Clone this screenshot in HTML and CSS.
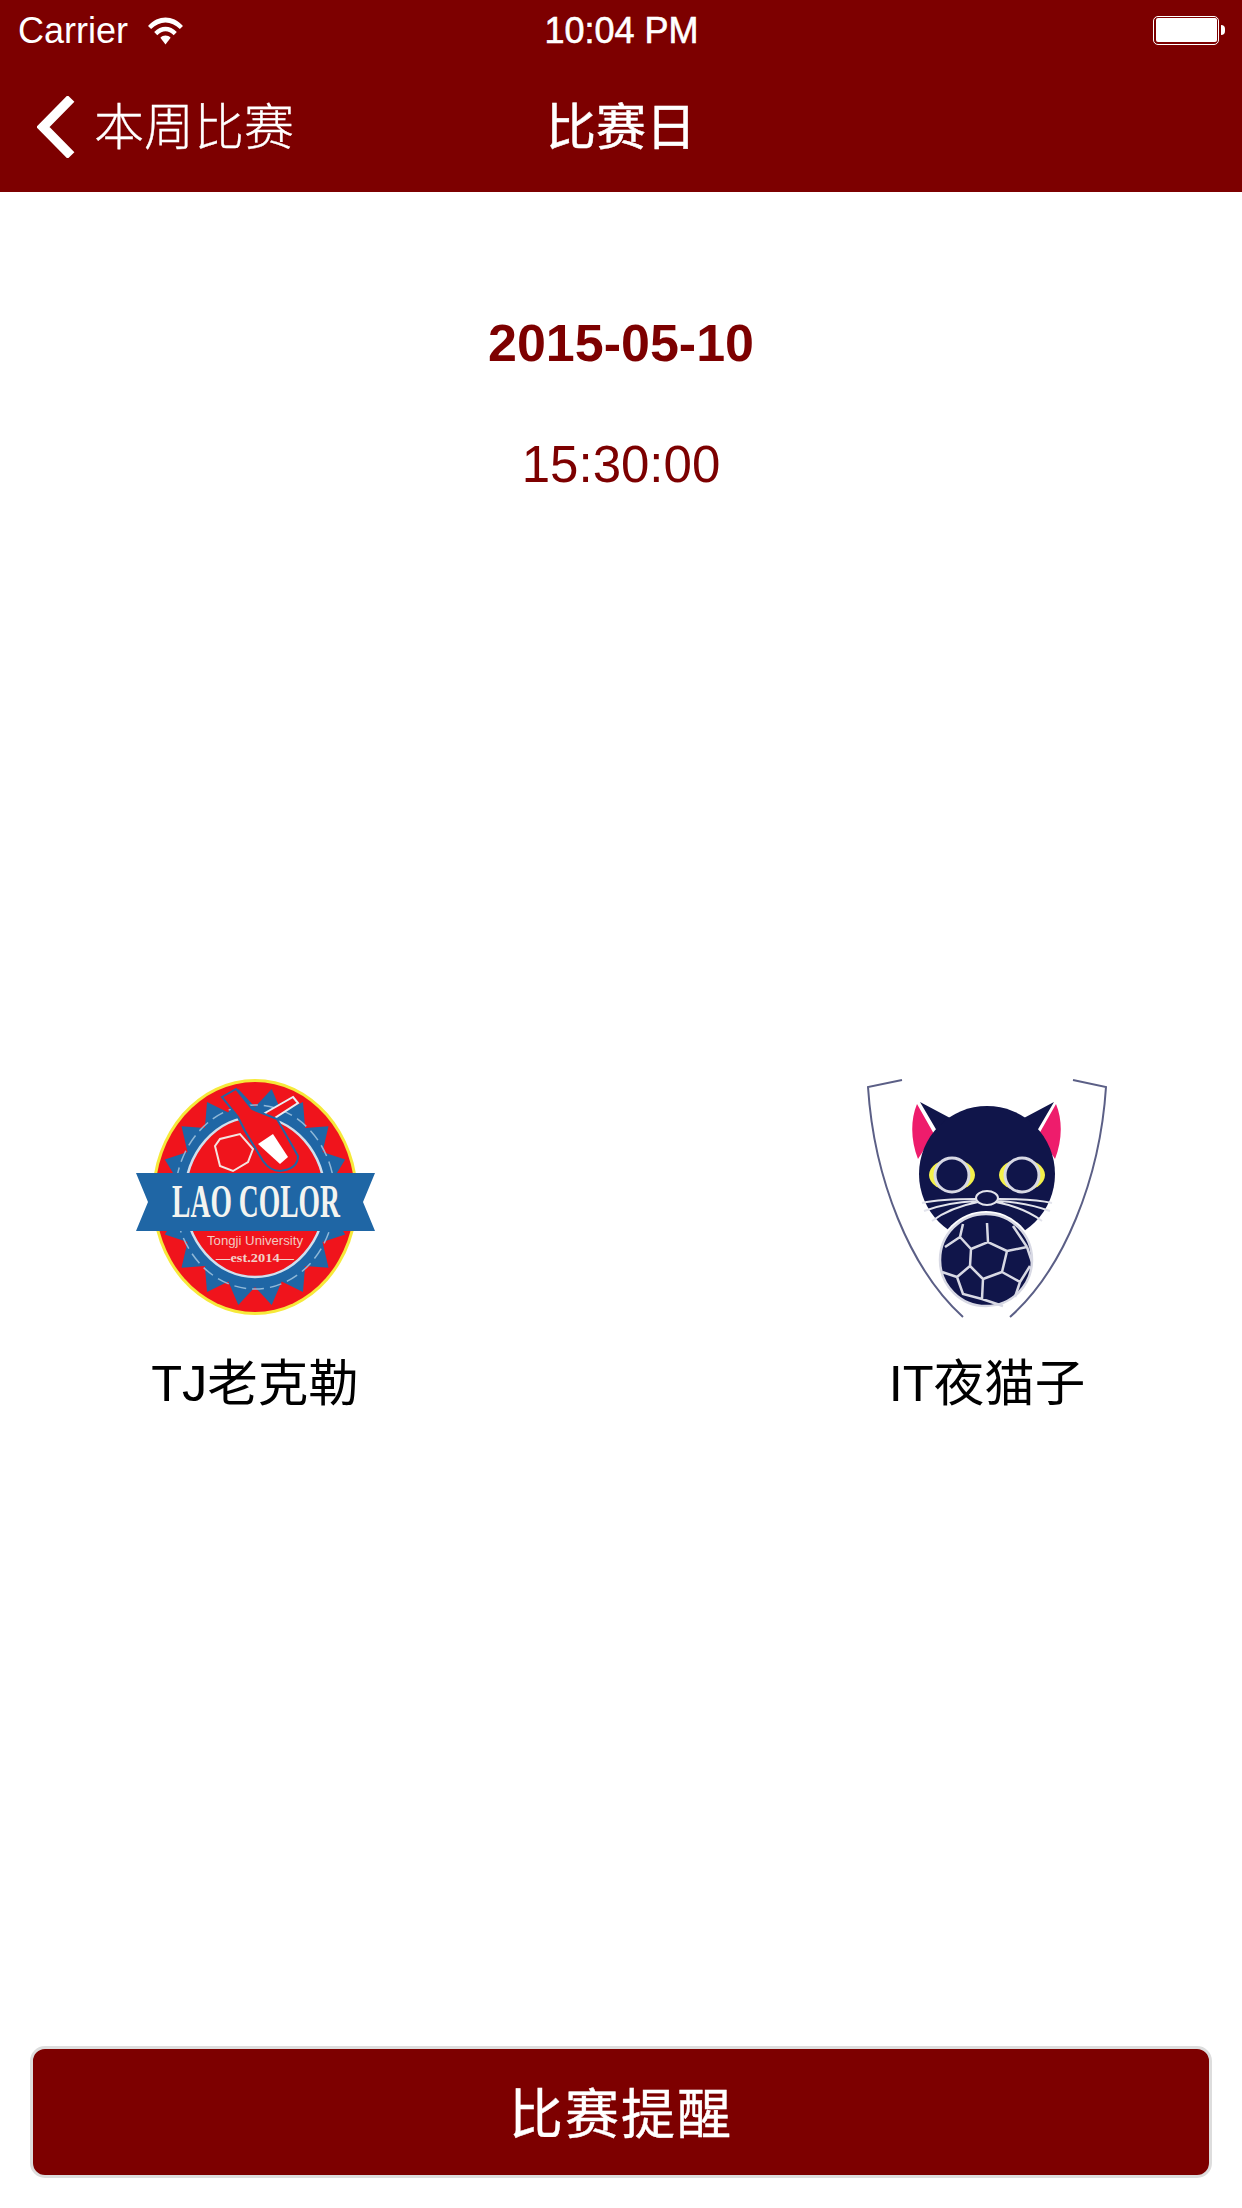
FILE: index.html
```html
<!DOCTYPE html>
<html lang="en">
<head>
    <meta charset="UTF-8">
    <meta name="viewport" content="width=device-width, initial-scale=1.0">
    <title>比赛日</title>
    <link rel="stylesheet" href="styles.css">
</head>
<body>

<div class="page">
    <header class="top-bar">
        <div class="status-bar">
            <div class="status-left">
                <span class="carrier">Carrier</span>
                <svg class="wifi" viewBox="0 0 36 28" width="37" height="29">
                    <path d="M1 9.500C11 -1.500 25 -1.500 35 9.500L32 12.500C23.500 4 12.500 4 4 12.500Z" fill="#fff"/>
                    <path d="M7 15.500C13.500 8.500 22.500 8.500 29 15.500L26 18.500C21 13.500 15 13.500 10 18.500Z" fill="#fff"/>
                    <path d="M13 21C15.500 18 20.500 18 23 21L18 27.500Z" fill="#fff"/>
                </svg>
            </div>
            <span class="clock">10:04 PM</span>
            <div class="status-right">
                <div class="battery"><div class="battery-fill"></div></div>
                <div class="battery-nub"></div>
            </div>
        </div>
        <nav class="nav-bar">
            <a href="#" class="back-link">
                <svg class="chevron" viewBox="0 0 38 62" width="38" height="62">
                    <path d="M34 2.500L6 31L34 59.500" fill="none" stroke="#fff" stroke-width="9.500"/>
                </svg>
                <span class="back-text">本周比赛</span>
            </a>
            <h1 class="nav-title">比赛日</h1>
            <div></div>
        </nav>
    </header>

    <main class="match">
        <div class="match-time">
            <p class="date">2015-05-10</p>
            <p class="time">15:30:00</p>
        </div>

        <div class="teams">
            <div class="team">
                <svg class="logo" viewBox="15 20 240 240" width="240" height="240">
                    <ellipse cx="135" cy="138" rx="103" ry="118" fill="#f6e93a"/>
                    <ellipse cx="135" cy="138" rx="100" ry="115" fill="#f0141c"/>
                    <polygon fill="#1f66a5" points="211.800,153.600 225.200,175.600 202.500,183 208.500,208.700 185.100,207 183,233 161.700,222.600 151.700,246 135,228 118.300,246 108.300,222.600 87,233 84.900,207 61.500,208.700 67.500,183 44.800,175.600 58.200,153.600 58.200,122.400 44.800,100.400 67.500,93 61.500,67.300 84.900,69 87,43 108.300,53.400 118.300,30 135,48 151.700,30 161.700,53.400 183,43 185.100,69 208.500,67.300 202.500,93 225.200,100.400 211.800,122.400"/>
                    <ellipse cx="135" cy="138" rx="80" ry="92" fill="none" stroke="#8fb8d8" stroke-width="1.500" stroke-dasharray="12 6"/>
                    <ellipse cx="135" cy="138" rx="70" ry="80" fill="#f0141c" stroke="#cfe0ee" stroke-width="2.500"/>
                    <path d="M173 38L178 44L150 62L145 54Z" fill="#f0141c" stroke="#e8eef4" stroke-width="2"/>
                    <path d="M95 87L100 80L120 75L133 90L128 103L113 112L100 107Z" fill="#f0141c" stroke="#f4e4e0" stroke-width="2"/>
                    <path d="M102 38L116 30L132 50L157 60L178 97Q178 110 160 112Q150 112 143 102L125 72L118 58Z" fill="#f0141c" stroke="#1f66a5" stroke-width="2"/>
                    <path d="M138 85L153 75L168 98L160 105Z" fill="#fff"/>
                    <path d="M16 114H255L243 143L255 172H16L28 143Z" fill="#1f66a5"/>
                    <text class="logo-name" transform="matrix(0.6 0 0 1 136 158)">LAO COLOR</text>
                    <text x="135" y="186" class="logo-small" textLength="96" lengthAdjust="spacingAndGlyphs">Tongji University</text>
                    <text x="135" y="203" class="logo-est" textLength="78" lengthAdjust="spacingAndGlyphs">—est.2014—</text>
                </svg>
                <p class="team-name">TJ老克勒</p>
            </div>
            <div class="team">
                <svg class="logo" viewBox="17 20 240 240" width="240" height="240">
                    <path d="M52 21L18 28C24 120 60 210 113 258M223 21L256 28C250 120 214 210 160 258" fill="none" stroke="#5b5f86" stroke-width="2"/>
                    <path d="M67 45L84 75L68 100C61 82 60 62 67 45ZM206 45L189 75L205 100C212 82 213 62 206 45Z" fill="#ee1c6c"/>
                    <path d="M70 43L102 60L87 72ZM204 43L172 60L187 72Z" fill="#10154a"/>
                    <circle cx="137" cy="115" r="68" fill="#10154a"/>
                    <ellipse cx="102" cy="116" rx="23" ry="16" fill="#f4f04a"/>
                    <ellipse cx="172" cy="116" rx="23" ry="16" fill="#f4f04a"/>
                    <circle cx="102" cy="116" r="17" fill="#10154a" stroke="#d8d9e4" stroke-width="3"/>
                    <circle cx="172" cy="116" r="17" fill="#10154a" stroke="#d8d9e4" stroke-width="3"/>
                    <path d="M72 144C90 140 108 140 126 140M74 152C90 146 106 143 126 142M82 162C94 153 108 147 128 143M202 144C184 140 166 140 148 140M200 152C184 146 168 143 148 142M192 162C180 153 166 147 146 143" fill="none" stroke="#e3e4ec" stroke-width="2"/>
                    <ellipse cx="137" cy="139" rx="11" ry="7" fill="#10154a" stroke="#e3e4ec" stroke-width="2"/>
                    <circle cx="136" cy="201" r="49" fill="#fff"/>
                    <circle cx="136" cy="201" r="46" fill="#10154a" stroke="#d8d9e4" stroke-width="2.500"/>
                    <path d="M121 190L138 183L157 192L152 213L133 220L120 207ZM138 183L137 164M157 192L177 188M152 213L170 223M133 220L132 240M120 207L107 218M121 190L110 178L113 165M110 178L95 188M107 218L92 213M107 218L113 235L132 240M132 240L153 247M170 223L180 207M177 188L163 167M177 188L182 203M170 223L165 238" fill="none" stroke="#d8d9e4" stroke-width="2.500"/>
                </svg>
                <p class="team-name">IT夜猫子</p>
            </div>
        </div>

        <a href="#" class="remind-btn">比赛提醒</a>
    </main>
</div>

</body>
</html>
```

FILE: styles.css
```css
body {
    font-family: "Liberation Sans", "Noto Sans CJK SC", sans-serif;
    margin: 0;
    padding: 0;
    background-color: #fff;
}

p {
    margin: 0;
}

.page {
    display: flex;
    flex-direction: column;
    height: 2208px;
    overflow: hidden;
}

.top-bar {
    background-color: #7d0000;
    color: #fff;
}

.status-bar {
    display: grid;
    grid-template-columns: 1fr auto 1fr;
    align-items: center;
    height: 60px;
    padding: 2px 17px 0 18px;
    box-sizing: border-box;
}

.status-left {
    display: flex;
    align-items: center;
    gap: 19px;
}

.carrier {
    font-size: 36px;
}

.wifi {
    margin-bottom: 2px;
}

.clock {
    font-size: 36px;
    -webkit-text-stroke: 0.6px #fff;
}

.status-right {
    display: flex;
    align-items: center;
    justify-content: flex-end;
    gap: 2px;
    margin-bottom: 2px;
}

.battery {
    width: 66px;
    height: 29px;
    box-sizing: border-box;
    border: 1.500px solid #fff;
    border-radius: 5px;
    padding: 1.500px;
}

.battery-fill {
    height: 100%;
    background-color: #fff;
    border-radius: 2px;
}

.battery-nub {
    width: 4px;
    height: 10px;
    background-color: #fff;
    border-radius: 0 5px 5px 0;
}

.nav-bar {
    display: grid;
    grid-template-columns: 1fr auto 1fr;
    align-items: center;
    height: 132px;
    padding: 0 0 4px 0;
    box-sizing: border-box;
}

.back-link {
    display: flex;
    align-items: center;
    gap: 19px;
    padding-left: 37px;
    color: #fff;
    font-size: 50px;
    font-weight: 300;
    text-decoration: none;
}

.chevron {
    margin-top: 5px;
}

.back-text {
    margin-top: -2px;
    -webkit-text-stroke: 0.3px #fff;
}

.nav-title {
    margin: -2px 0 0;
    font-size: 50px;
    font-weight: 400;
    -webkit-text-stroke: 0.5px #fff;
}

.match {
    flex: 1;
    display: flex;
    flex-direction: column;
    padding: 0 30px 30px;
}

.match-time {
    text-align: center;
    color: #7d0000;
    padding-top: 121px;
}

.date {
    font-size: 52px;
    font-weight: bold;
    line-height: 60px;
}

.time {
    font-size: 51px;
    line-height: 60px;
    margin-top: 62px;
}

.teams {
    display: flex;
    justify-content: space-between;
    padding: 0 105px;
    margin-top: 584px;
}

.team {
    display: flex;
    flex-direction: column;
    align-items: center;
    width: 240px;
}

.logo {
    display: block;
}

.team-name {
    font-size: 50.500px;
    line-height: 60px;
    margin-top: 35px;
    color: #000;
    white-space: nowrap;
}

.logo-name {
    font-family: "Liberation Serif", serif;
    font-weight: bold;
    font-size: 46px;
    fill: #f4f4f0;
    text-anchor: middle;
}

.logo-small {
    font-size: 12px;
    fill: #f2c8c0;
    text-anchor: middle;
}

.logo-est {
    font-family: "Liberation Serif", serif;
    font-weight: bold;
    font-size: 13px;
    fill: #f2d0c8;
    text-anchor: middle;
}

.remind-btn {
    display: flex;
    align-items: center;
    justify-content: center;
    height: 132px;
    box-sizing: border-box;
    margin-top: auto;
    padding-bottom: 4px;
    background-color: #7d0000;
    border: 3px solid #ddd;
    border-radius: 15px;
    color: #fff;
    font-size: 54px;
    font-weight: 400;
    letter-spacing: 2px;
    -webkit-text-stroke: 0.4px #fff;
    text-decoration: none;
}
```
